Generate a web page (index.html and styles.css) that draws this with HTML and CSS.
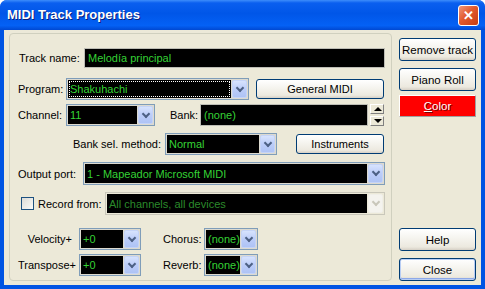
FILE: index.html
```html
<!DOCTYPE html>
<html lang="es">
<head>
    <meta charset="UTF-8">
    <title>MIDI Track Properties</title>
    <link rel="stylesheet" href="styles.css">
</head>
<body>
    <div class="window">
        <div class="titlebar">
            <span class="title">MIDI Track Properties</span>
            <span class="close-x">&#x2715;</span>
        </div>
        <div class="client">
            <div class="group">
                <div class="row r-name">
                    <span class="lbl w-name">Track name:</span>
                    <div class="field wide">Melodía principal</div>
                </div>
                <div class="row r-prog">
                    <span class="lbl w-prog">Program:</span>
                    <div class="combo c-prog">
                        <div class="val focus">Shakuhachi</div>
                        <span class="drop"></span>
                    </div>
                    <button class="btn b-gm">General MIDI</button>
                </div>
                <div class="row r-chan">
                    <span class="lbl w-prog">Channel:</span>
                    <div class="combo c-chan">
                        <div class="val">11</div>
                        <span class="drop"></span>
                    </div>
                    <span class="lbl w-bank">Bank:</span>
                    <div class="field bank">(none)</div>
                    <div class="spin">
                        <span class="up"></span>
                        <span class="down"></span>
                    </div>
                </div>
                <div class="row r-bsel">
                    <span class="lbl w-bsel">Bank sel. method:</span>
                    <div class="combo c-bsel">
                        <div class="val">Normal</div>
                        <span class="drop"></span>
                    </div>
                    <button class="btn b-inst">Instruments</button>
                </div>
                <div class="row r-out">
                    <span class="lbl w-out">Output port:</span>
                    <div class="combo c-out">
                        <div class="val">1 - Mapeador Microsoft MIDI</div>
                        <span class="drop"></span>
                    </div>
                </div>
                <div class="row r-rec">
                    <span class="check"></span>
                    <span class="lbl w-rec">Record from:</span>
                    <div class="combo c-rec disabled">
                        <div class="val">All channels, all devices</div>
                        <span class="drop"></span>
                    </div>
                </div>
                <div class="row r-vel">
                    <span class="lbl w-fx">Velocity+</span>
                    <div class="combo c-fx">
                        <div class="val">+0</div>
                        <span class="drop"></span>
                    </div>
                    <span class="lbl w-eff">Chorus:</span>
                    <div class="combo c-eff">
                        <div class="val">(none)</div>
                        <span class="drop"></span>
                    </div>
                </div>
                <div class="row r-tra">
                    <span class="lbl w-fx">Transpose+</span>
                    <div class="combo c-fx">
                        <div class="val">+0</div>
                        <span class="drop"></span>
                    </div>
                    <span class="lbl w-eff">Reverb:</span>
                    <div class="combo c-eff">
                        <div class="val">(none)</div>
                        <span class="drop"></span>
                    </div>
                </div>
            </div>
            <div class="side">
                <button class="btn side-btn">Remove track</button>
                <button class="btn side-btn b-piano">Piano Roll</button>
                <button class="color-btn"><u>C</u>olor</button>
                <div class="spacer"></div>
                <button class="btn side-btn">Help</button>
                <button class="btn side-btn b-close">Close</button>
            </div>
        </div>
    </div>
</body>
</html>
```

FILE: styles.css
```css
body {
    margin: 0;
    padding: 0;
    background: #fff;
    overflow: hidden;
    font-family: "Liberation Sans", Arial, sans-serif;
    font-size: 11px;
}
.window {
    width: 485px;
    height: 289px;
    background: #0054e3;
    border-radius: 7px 7px 0 0;
    display: flex;
    flex-direction: column;
    box-sizing: border-box;
}
.titlebar {
    height: 30px;
    flex: none;
    border-radius: 7px 7px 0 0;
    background: linear-gradient(to bottom, #3d8dfb 0%, #0a5fef 10%, #0056e8 45%, #0461f5 85%, #0048d2 100%);
    display: flex;
    align-items: center;
    justify-content: space-between;
    padding: 0 6px 0 7px;
}
.title {
    color: #fff;
    font-weight: bold;
    font-size: 13px;
    text-shadow: 1px 1px 0 #0a1e7a;
    margin-top: -1px;
}
.close-x {
    width: 19px;
    height: 19px;
    border: 1px solid #fff;
    border-radius: 3px;
    background: linear-gradient(135deg, #f0977a 0%, #e2592d 45%, #c63d12 100%);
    color: #fff;
    font-size: 13px;
    font-weight: bold;
    display: flex;
    align-items: center;
    justify-content: center;
    line-height: 1;
}
.client {
    flex: 1;
    background: #ece9d8;
    margin: 0 4px 4px 4px;
    display: flex;
    padding: 3px 5px 4px 5px;
    gap: 7px;
}
.group {
    width: 383px;
    height: 248px;
    box-sizing: border-box;
    border: 1px solid #d0d0bf;
    border-radius: 4px;
    padding: 14px 0 0 8px;
    display: flex;
    flex-direction: column;
}
.row {
    display: flex;
    align-items: center;
}
.r-name { height: 20px; }
.r-prog { height: 22px; margin-top: 10px; }
.r-chan { height: 22px; margin-top: 4px; }
.r-bsel { height: 22px; margin-top: 7px; }
.r-out { height: 23px; margin-top: 7px; }
.r-rec { height: 23px; margin-top: 7px; }
.r-vel { height: 22px; margin-top: 13px; }
.r-tra { height: 22px; margin-top: 4px; }
.lbl {
    color: #000;
    white-space: nowrap;
    flex: none;
}
.w-name { width: 66px; padding-left: 1px; box-sizing: border-box; }
.w-prog { width: 48px; }
.w-bank { width: 30px; margin-left: 15px; }
.w-bsel { width: 147px; text-align: right; padding-right: 4px; box-sizing: border-box; }
.w-out { width: 65px; }
.w-rec { width: 67px; margin-left: 4px; }
.w-fx { width: 61px; text-align: right; padding-right: 7px; box-sizing: border-box; }
.w-eff { width: 41px; margin-left: 22px; text-align: right; padding-right: 5px; box-sizing: border-box; }
.field {
    background: #000;
    color: #35d235;
    height: 100%;
    box-sizing: border-box;
    padding: 1px 3px;
    display: flex;
    align-items: center;
    border: 1px solid #bdbdb5;
}
.wide { width: 301px; }
.bank { width: 168px; }
.spin {
    width: 14px;
    height: 100%;
    margin-left: 2px;
    display: flex;
    flex-direction: column;
    gap: 2px;
    justify-content: center;
}
.spin span {
    height: 9px;
    background: #ece9d8;
    border: 1px solid #fff;
    border-right-color: #808080;
    border-bottom-color: #808080;
    position: relative;
}
.spin .up::after, .spin .down::after {
    content: "";
    position: absolute;
    left: 3px;
    border-left: 4px solid transparent;
    border-right: 4px solid transparent;
}
.spin .up::after { top: 2px; border-bottom: 4px solid #000; }
.spin .down::after { top: 2px; border-top: 4px solid #000; }
.combo {
    height: 100%;
    box-sizing: border-box;
    border: 1px solid #7f9db9;
    padding: 1px;
    background: #dcdad0;
    display: flex;
    flex: none;
}
.combo .val {
    flex: 1;
    background: #000;
    color: #35d235;
    padding: 0 2px;
    display: flex;
    align-items: center;
    white-space: nowrap;
    overflow: hidden;
}
.combo .val.focus {
    outline: 1px dotted #fff;
    outline-offset: -2px;
}
.drop {
    width: 15px;
    margin-left: 1px;
    border-radius: 2px;
    background: linear-gradient(to bottom, #d7e3fd 0%, #bccdf9 50%, #aec3f5 100%);
    border: 1px solid #c4d3f7;
    box-sizing: border-box;
    display: flex;
    align-items: center;
    justify-content: center;
    position: relative;
}
.drop::after {
    content: "";
    width: 4px;
    height: 4px;
    border-right: 2px solid #4d6185;
    border-bottom: 2px solid #4d6185;
    transform: rotate(45deg);
    margin-top: -3px;
}
.combo.disabled {
    border-color: #c9c7ba;
    background: #ece9d8;
}
.combo.disabled .val { color: #2b8a2b; }
.combo.disabled .drop {
    background: #f4f3ee;
    border-color: #f0efe8;
}
.combo.disabled .drop::after { border-color: #c9c7ba; }
.c-prog { width: 183px; }
.c-chan { width: 89px; }
.c-bsel { width: 112px; }
.c-out { width: 302px; }
.c-rec { width: 280px; }
.c-fx { width: 62px; }
.c-eff { width: 54px; }
.btn {
    font-family: "Liberation Sans", Arial, sans-serif;
    font-size: 11px;
    color: #000;
    border: 1px solid #003c74;
    border-radius: 3px;
    background: linear-gradient(to bottom, #ffffff 0%, #f6f5f0 40%, #ece9df 85%, #d6d0c5 100%);
    padding: 0;
    cursor: pointer;
}
.b-gm { width: 128px; height: 20px; margin-left: 7px; }
.b-inst { width: 88px; height: 20px; margin-left: 19px; }
.side {
    width: 77px;
    display: flex;
    flex-direction: column;
    padding-top: 5px;
}
.side-btn { width: 77px; height: 23px; font-size: 11.5px; }
.b-piano { margin-top: 7px; }
.color-btn {
    margin-top: 4px;
    width: 77px;
    height: 22px;
    background: #ff0000;
    color: #fff;
    font-family: "Liberation Sans", Arial, sans-serif;
    font-size: 11.5px;
    border: 1px solid #fff;
    border-right-color: #a0a0a0;
    border-bottom-color: #a0a0a0;
    padding: 0;
    text-shadow: 1px 1px 0 #7a0000;
}
.spacer { flex: 1; }
.b-close {
    margin-top: 7px;
    margin-bottom: 0;
    box-shadow: inset 0 0 0 1px #b8cdf4, inset 0 -1px 0 1px #8ea9e8;
}
.check {
    width: 13px;
    height: 13px;
    box-sizing: border-box;
    border: 1px solid #1c5180;
    background: linear-gradient(135deg, #dcdcd7 0%, #fafaf8 100%);
    margin-left: 3px;
    flex: none;
}
```
